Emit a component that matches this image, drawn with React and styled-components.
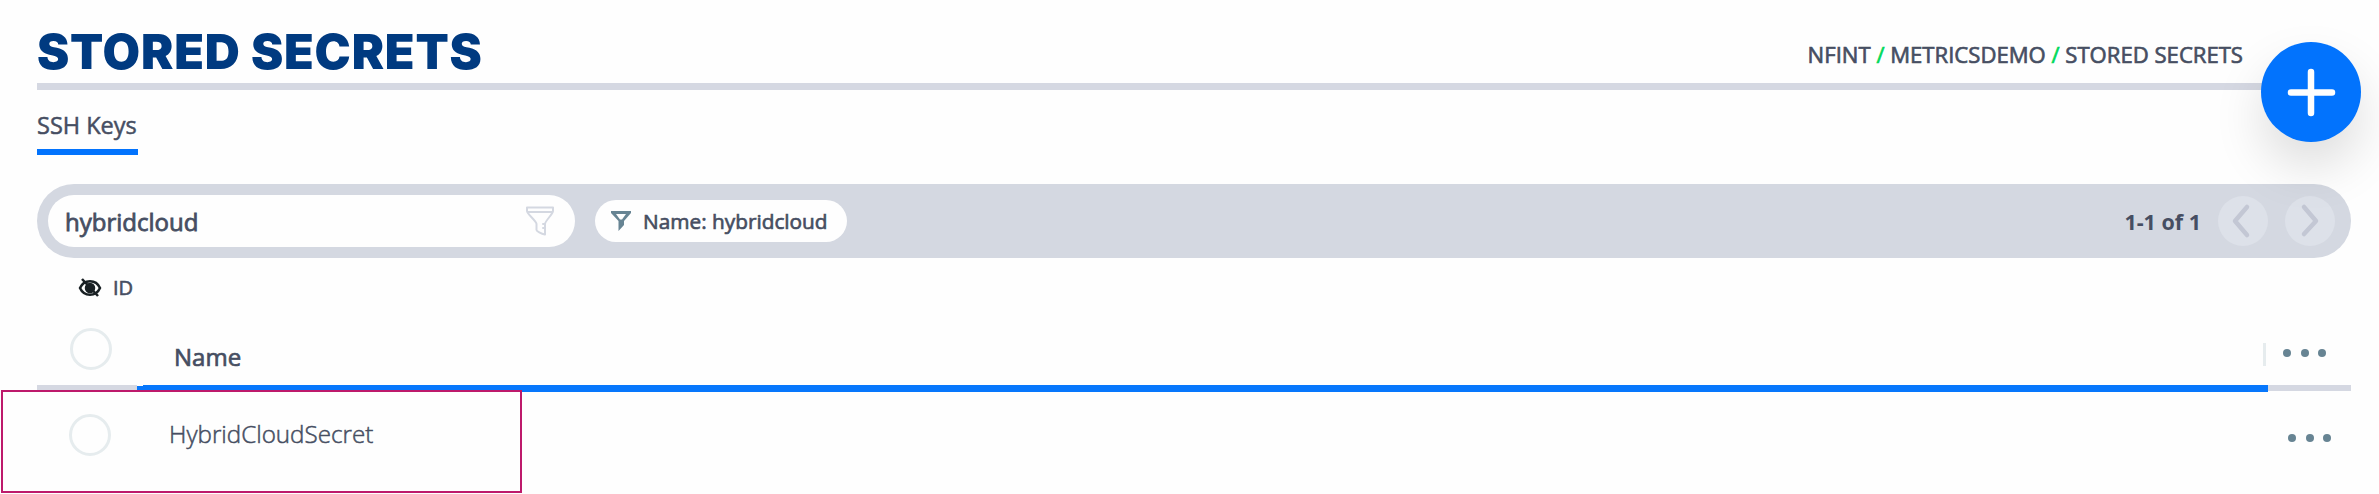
import React from "react";
import styled, { createGlobalStyle } from "styled-components";

const GlobalStyle = createGlobalStyle`
  * {
    box-sizing: border-box;
  }
  body {
    margin: 0;
    background: #fefefe;
    font-family: "Open Sans", "Noto Sans", sans-serif;
    color: #464e62;
    overflow: hidden;
  }
`;

const Page = styled.div`
  position: relative;
  width: 2379px;
  height: 494px;
  padding: 0 28px 0 37px;
  overflow: hidden;
`;
const Header = styled.header`
  display: flex;
  justify-content: space-between;
  height: 90px;
  padding-right: 108px;
  border-bottom: 7px solid #d5d8e2;
`;
const Title = styled.h1`
  margin: 22px 0 0;
  font-family: Inter, sans-serif;
  font-size: 48.5px;
  font-weight: 900;
  line-height: 59px;
  letter-spacing: 0.8px;
  white-space: nowrap;
  color: #003a80;
`;
const Breadcrumb = styled.nav`
  margin-top: 39px;
  font-size: 22.1px;
  font-weight: 500;
  line-height: 30px;
  white-space: nowrap;
  -webkit-text-stroke: 0.65px currentColor;
`;
const Slash = styled.span`
  color: #00d95a;
`;
const AddButton = styled.button`
  position: absolute;
  left: 2261px;
  top: 42px;
  width: 100px;
  height: 100px;
  padding: 0;
  border: 0;
  border-radius: 50%;
  background: #0273fd;
  box-shadow: 0 25px 50px rgba(0, 0, 0, 0.13);
  z-index: 1;
`;
const Tabs = styled.div`
  display: flex;
  height: 94px;
`;
const Tab = styled.div`
  width: 101px;
  height: 65px;
  padding-top: 20px;
  border-bottom: 6px solid #0273fd;
  font-size: 23.5px;
  font-weight: 500;
  line-height: 30px;
  white-space: nowrap;
  -webkit-text-stroke: 0.5px currentColor;
`;
const FilterBar = styled.div`
  display: flex;
  align-items: center;
  height: 74px;
  padding: 0 16px 0 11px;
  border-radius: 37px;
  background: #d4d8e1;
`;
const SearchBox = styled.div`
  display: flex;
  align-items: center;
  justify-content: space-between;
  width: 527px;
  height: 52px;
  margin-right: 20px;
  padding: 0 20px 0 17px;
  border-radius: 26px;
  background: #fefefe;
  font-size: 24px;
  font-weight: 500;
  -webkit-text-stroke: 0.8px currentColor;
`;
const Chip = styled.div`
  display: flex;
  align-items: center;
  gap: 12px;
  width: 252px;
  height: 42px;
  padding-left: 16px;
  border-radius: 21px;
  background: #fefefe;
  font-size: 20.8px;
  font-weight: 500;
  white-space: nowrap;
  -webkit-text-stroke: 0.65px currentColor;
`;
const Count = styled.span`
  margin-left: auto;
  margin-right: 17px;
  font-size: 21.5px;
  font-weight: 700;
`;
const PageButton = styled.div`
  width: 50px;
  height: 50px;
  margin-left: ${(props) => (props.$spaced ? "17px" : "0")};
  border-radius: 50%;
  background: #dde1e9;
`;
const HiddenColumn = styled.div`
  display: flex;
  align-items: center;
  gap: 11px;
  height: 59px;
  padding-left: 41px;
  font-size: 20px;
  font-weight: 500;
  -webkit-text-stroke: 0.6px currentColor;
`;
const HeadRow = styled.div`
  display: flex;
  height: 68px;
`;
const Radio = styled.div`
  flex: none;
  width: 42px;
  height: 42px;
  margin: ${(props) => props.$margin};
  border: 3px solid #e6ecee;
  border-radius: 50%;
`;
const HeadLabel = styled.div`
  flex: 1;
  margin-top: 25px;
  font-size: 24px;
  font-weight: 500;
  line-height: 30px;
  -webkit-text-stroke: 0.7px currentColor;
`;
const Separator = styled.div`
  width: 3px;
  height: 23px;
  margin: 26px 17px 0 0;
  background: #e6ecee;
`;
const Dots = styled.div`
  display: flex;
  gap: 9.5px;
  margin: ${(props) => props.$margin};
`;
const Dot = styled.i`
  width: 8px;
  height: 8px;
  border-radius: 50%;
  background: #678493;
`;
const Divider = styled.div`
  display: flex;
  height: 7px;
`;
const Segment = styled.div`
  width: ${(props) => props.$width}px;
  height: ${(props) => props.$height}px;
  margin-top: ${(props) => props.$top || 0}px;
  background: ${(props) => (props.$active ? "#0777fc" : "#d5d8e2")};
`;
const Row = styled.div`
  display: flex;
  height: 102px;
`;
const Cell = styled.div`
  flex: 1;
  margin-top: 27px;
  font-size: 24.2px;
  font-weight: 300;
  line-height: 30px;
  -webkit-text-stroke: 0.5px currentColor;
`;
const Highlight = styled.div`
  position: absolute;
  left: 1px;
  top: 390px;
  width: 521px;
  height: 103px;
  border: 2px solid #bd196b;
`;

const Menu = ({ margin }) => (
  <Dots $margin={margin}>
    <Dot />
    <Dot />
    <Dot />
  </Dots>
);

function App() {
  return (
    <>
      <GlobalStyle />
      <Page>
        <Header>
          <Title>STORED SECRETS</Title>
          <Breadcrumb>
            NFINT <Slash>/</Slash> METRICSDEMO <Slash>/</Slash> STORED SECRETS
          </Breadcrumb>
        </Header>
        <AddButton>
          <svg width="100" height="100" viewBox="0 0 100 100">
            <path
              d="M50 30V71M30 50.5H71"
              stroke="#fefefe"
              strokeWidth="6.5"
              strokeLinecap="round"
            />
          </svg>
        </AddButton>
        <Tabs>
          <Tab>SSH Keys</Tab>
        </Tabs>
        <FilterBar>
          <SearchBox>
            hybridcloud
            <svg width="30" height="30" viewBox="0 0 30 30" fill="none" stroke="#d4d8e1" strokeWidth="2" strokeLinejoin="round" strokeLinecap="round">
              <path d="M2 1.500H28V5C28 8 20 15 20 18V28.500C16 28 11.500 25 11.500 24V18C11.500 15 2 8 2 5ZM2.500 6H27.500M18 18H19M18 22H19" />
            </svg>
          </SearchBox>
          <Chip>
            <svg width="20" height="20" viewBox="0 0 20 20">
              <path
                fillRule="evenodd"
                fill="#678493"
                d="M0 0H20V2L13 10V14L7.500 20V10L0 2ZM5 3L9 8.500H11L15 3Z"
              />
            </svg>
            Name: hybridcloud
          </Chip>
          <Count>1-1 of 1</Count>
          <PageButton>
            <svg width="50" height="50" fill="none" stroke="#c3c7d4" strokeWidth="4.500" strokeLinecap="round" strokeLinejoin="round">
              <path d="M29 11L17 25L29 39" />
            </svg>
          </PageButton>
          <PageButton $spaced>
            <svg width="50" height="50" fill="none" stroke="#c3c7d4" strokeWidth="4.500" strokeLinecap="round" strokeLinejoin="round">
              <path d="M19 11L31 25L19 38" />
            </svg>
          </PageButton>
        </FilterBar>
        <HiddenColumn>
          <svg width="24" height="20" viewBox="0 0 24 20" fill="none" stroke="#192024" strokeWidth="2.500">
            <path d="M2 10C6 1 18 1 22 10C18 19 6 19 2 10Z" />
            <circle cx="12" cy="10" r="4" fill="#192024" />
            <path d="M4 1L20 18" />
          </svg>
          ID
        </HiddenColumn>
        <HeadRow>
          <Radio $margin="11px 62px 0 33px" />
          <HeadLabel>Name</HeadLabel>
          <Separator />
          <Menu margin="32px 25px 0 0" />
        </HeadRow>
        <Divider>
          <Segment $width={100} $height={5} />
          <Segment $width={6} $height={5} $top={1} $active />
          <Segment $width={2125} $height={7} $active />
          <Segment $width={83} $height={6} />
        </Divider>
        <Row>
          <Radio $margin="22px 58px 0 32px" />
          <Cell>HybridCloudSecret</Cell>
          <Menu margin="42px 20px 0 0" />
        </Row>
        <Highlight />
      </Page>
    </>
  );
}

export default App;
